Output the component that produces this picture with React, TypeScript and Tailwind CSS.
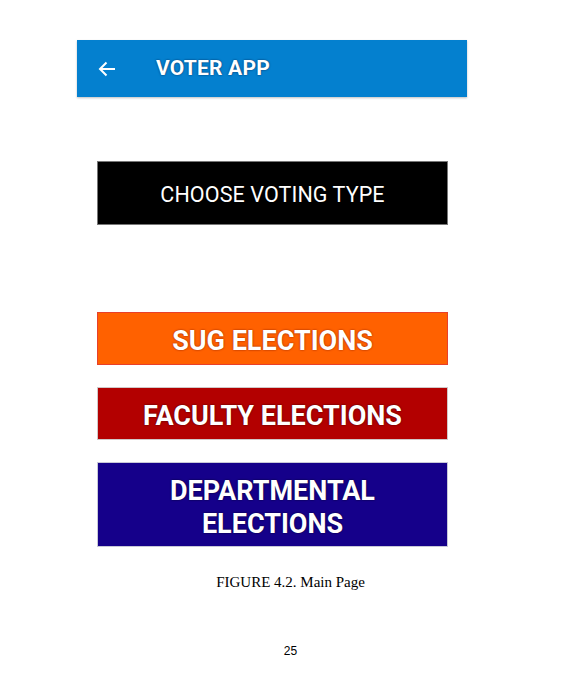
import React from "react";

export default function App() {
  const roboto = { fontFamily: "Roboto, 'Liberation Sans', sans-serif" } as const;
  return (
    <div className="w-[575px] h-[680px] bg-white flex flex-col relative" style={roboto}>
      <div className="mt-[40px] ml-[77px] w-[390px] h-[57px] bg-[#0480cf] flex items-center shadow-[0_1px_2px_rgba(0,0,0,0.25)]">
        <svg className="ml-[21px]" width="18" height="16" viewBox="0 0 18 16" fill="none">
          <path d="M17 8H2M8.5 1.5L2 8l6.5 6.5" stroke="white" strokeWidth="2" />
        </svg>
        <span className="ml-[40px] text-white font-bold text-[21px] tracking-[0.2px] [text-shadow:0_0_2px_rgba(0,0,40,0.7)]">
          VOTER APP
        </span>
      </div>

      <div className="mt-[64px] ml-[97px] w-[351px] h-[64px] bg-black border border-[#777] flex items-center justify-center pt-[5px]">
        <span className="text-white text-[21.5px] tracking-[0.1px]">CHOOSE VOTING TYPE</span>
      </div>

      <div className="mt-[87px] ml-[97px] w-[351px] flex flex-col gap-[22px]">
        <div className="h-[53px] bg-[#ff6100] border border-[#e8402a] flex items-center justify-center pt-[5px]">
          <span className="text-white font-bold text-[27px] [text-shadow:0_0_2px_rgba(120,20,0,0.9)]">SUG ELECTIONS</span>
        </div>
        <div className="h-[53px] bg-[#b30000] border border-[#d0c8c8] flex items-center justify-center pt-[5px]">
          <span className="text-white font-bold text-[27px] [text-shadow:0_0_2px_rgba(40,0,0,0.9)]">FACULTY ELECTIONS</span>
        </div>
        <div className="h-[85px] bg-[#15008a] border border-[#c8c8d8] flex items-center justify-center pt-[6px]">
          <span className="text-white font-bold text-[27px] leading-[33px] text-center [text-shadow:0_0_2px_rgba(0,0,30,0.9)]">
            DEPARTMENTAL
            <br />
            ELECTIONS
          </span>
        </div>
      </div>

      <div className="mt-[25px] text-center text-black text-[15px] leading-[20px] ml-[6px]" style={{ fontFamily: "'Liberation Serif', serif" }}>
        FIGURE 4.2. Main Page
      </div>

      <div className="mt-[50px] text-center text-black text-[12px] ml-[6px]" style={{ fontFamily: "'Liberation Sans', sans-serif" }}>
        25
      </div>
    </div>
  );
}
